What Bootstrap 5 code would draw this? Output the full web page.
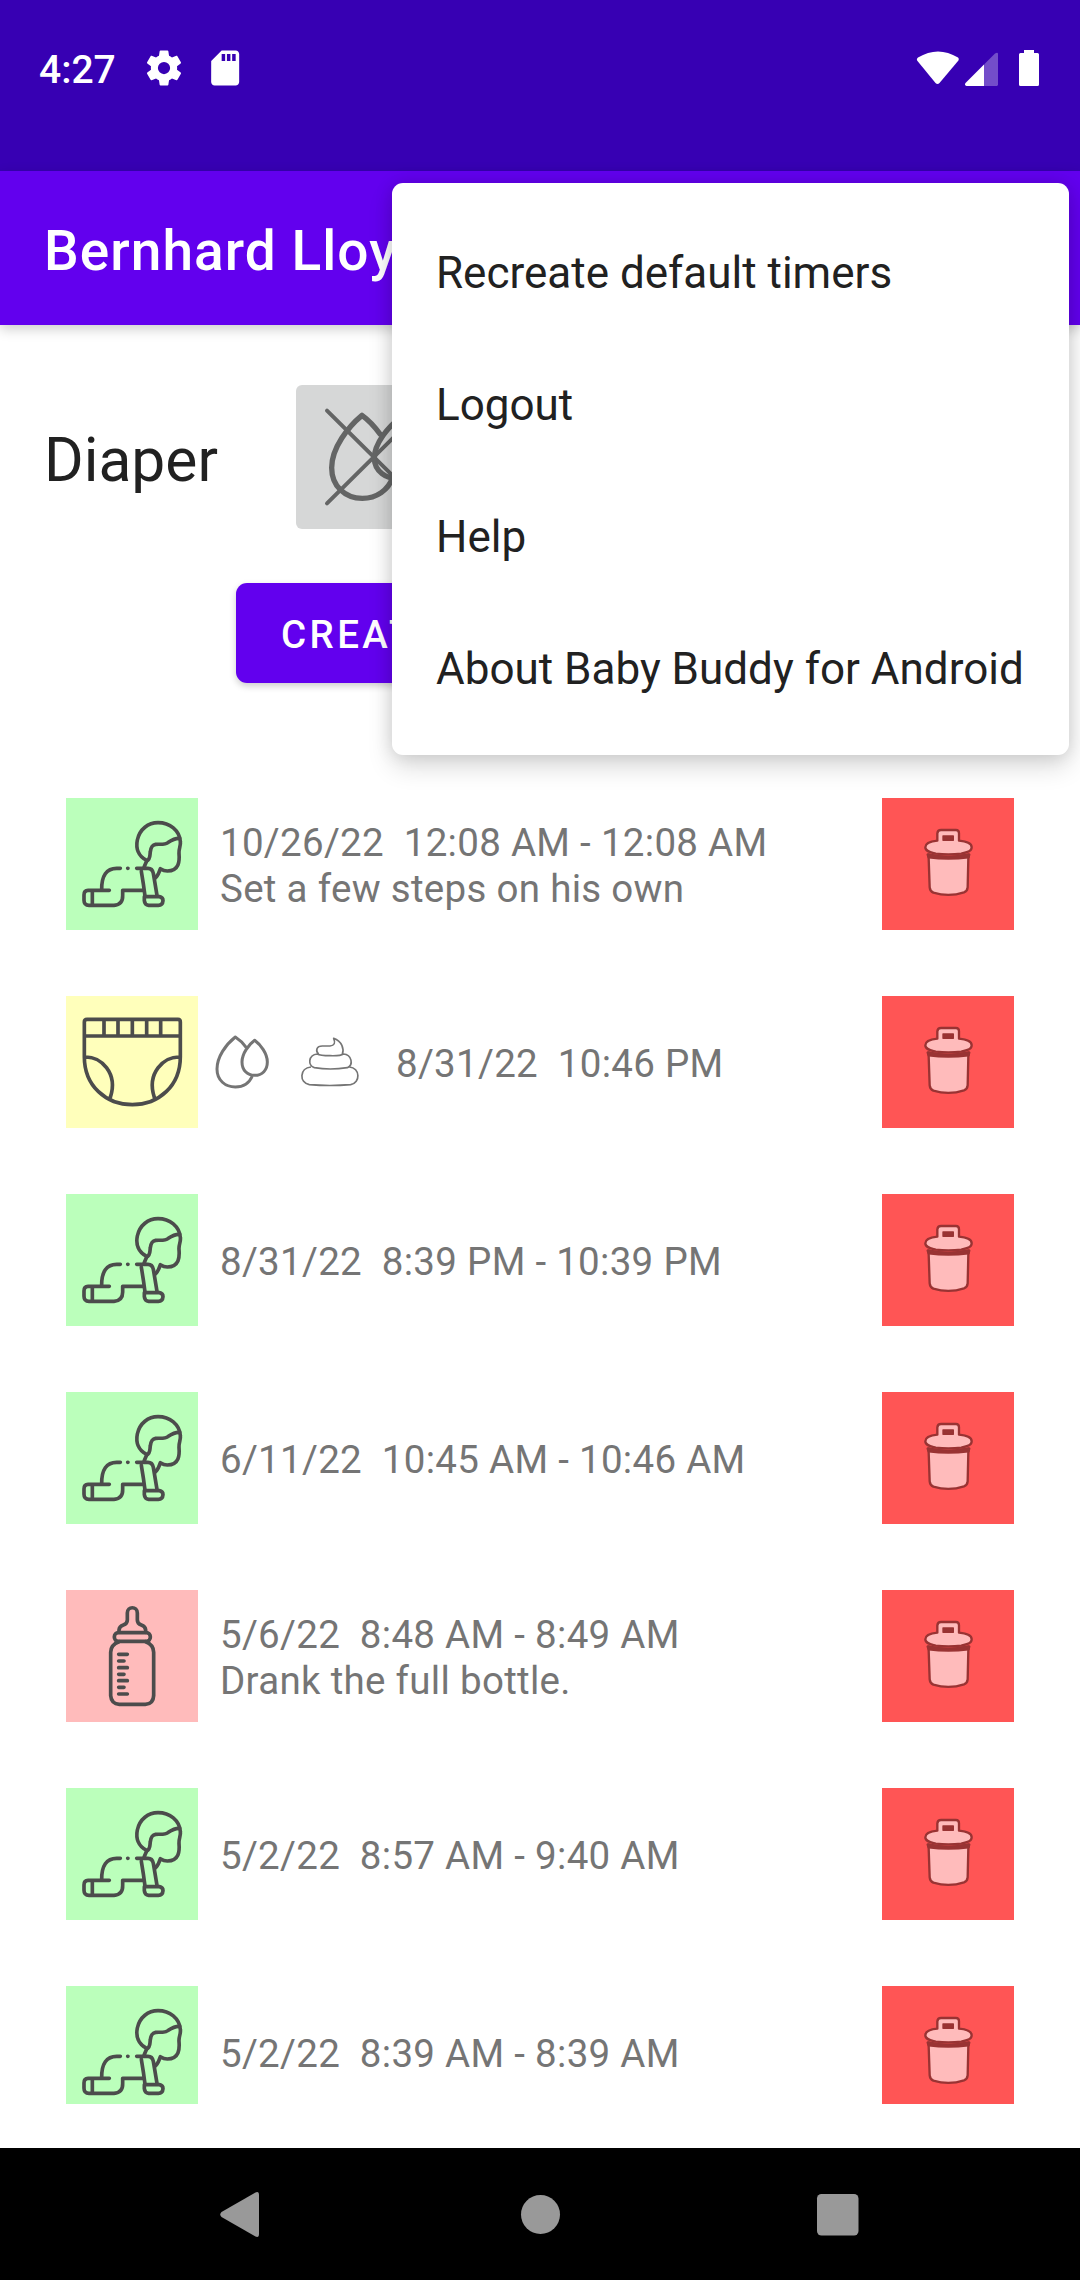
<!DOCTYPE html>
<html lang="en">
<head>
<meta charset="utf-8">
<meta name="viewport" content="width=device-width, initial-scale=1">
<title>Baby Buddy</title>
<link rel="stylesheet" href="https://cdn.jsdelivr.net/npm/bootstrap@5.3.0/dist/css/bootstrap.min.css">
<style>
body { font-family: Roboto, sans-serif; width: 1080px; height: 2280px; overflow: hidden; background: #fff; color: #212121; }
svg { display: block; flex: none; }
.status-area { height: 171px; background: #3700b3; padding: 0 40px 0 39px; }
.status-line { height: 135px; }
.clock { font-size: 39px; font-weight: 500; line-height: 46px; width: 104px; padding-top: 4px; }
.app-bar { height: 154px; background: #6200ee; padding: 6px 44px 0; box-shadow: 0 4px 12px rgba(0,0,0,.2); }
.app-title { font-size: 55px; font-weight: 500; letter-spacing: 1.05px; }
.entry-form { height: 429px; padding-top: 60px; }
.entry-row { padding-left: 44px; }
.entry-label { font-size: 60.5px; width: 252px; padding-top: 8px; }
.toggle-tile { width: 144px; height: 144px; background: #d6d7d7; border-radius: 6px; }
.create-btn { width: 608px; height: 100px; margin: 54px auto 0; padding: 4px 0 0 45px; border: 0; border-radius: 11px; background: #6200ee; font-size: 38.5px; font-weight: 500; letter-spacing: 3.4px; box-shadow: 0 3px 7px rgba(0,0,0,.2); }
.timeline { height: 1350px; padding: 44px 66px 0; gap: 66px; }
.timeline-clip { height: 1350px; overflow: hidden; }
.entry { height: 132px; flex: none; }
.tile { width: 132px; height: 132px; }
.tile-play { background: #bbffbb; }
.tile-change { background: #ffffbb; }
.tile-feed { background: #ffbbbb; }
.tile-delete { background: #ff5555; }
.entry-text { margin-left: 22px; padding-top: 3px; font-size: 38.5px; line-height: 46px; color: #757575; white-space: pre; letter-spacing: .3px; }
.entry-text-change { margin-left: 30px; }
.ink { fill: none; stroke: #4c4c4c; stroke-width: 11; stroke-linejoin: round; stroke-linecap: round; }
.sys-nav { height: 132px; background: #000; }
.overflow-menu { position: absolute; left: 392px; top: 183px; width: 677px; padding: 22px 0; background: #fff; border-radius: 11px; box-shadow: 0 12px 26px rgba(0,0,0,.14), 0 0 18px rgba(0,0,0,.13); }
.overflow-menu a { height: 132px; padding: 3px 44px 0; font-size: 44px; color: #212121; white-space: nowrap; text-decoration: none; }
</style>
</head>
<body class="position-relative d-flex flex-column">
<svg width="0" height="0" class="position-absolute">
  <symbol id="baby" viewBox="48 54 396 396">
    <g class="ink">
      <path d="M290 241C265 229 257 205 262 180C269 147 295 128 324 128C360 128 388 151 391 184C393 199 386 204 387 220C389 243 388 272 352 273C343 273 337 270 331 266C328 276 323 287 317 293"/>
      <path d="M290 243C302 238 299 226 301 215C303 200 307 195 317 193C332 192 345 195 355 187C365 180 374 174 389 175"/>
      <path d="M290 243L282 262M211 265H200C170 265 154 286 155 331M233 265h1M260 265H294Q307 265 310 280L321 346M274 274Q281 315 285 348M178 331H114Q102 331 102 345V361Q102 376 117 376H192Q219 374 218 346V331H278M127 333V374"/>
      <path d="M283 350H328Q339 352 339 362Q338 376 325 376H296Q284 375 283 362Z"/>
    </g>
  </symbol>
  <symbol id="diaper" viewBox="48 48 396 396">
    <g class="ink">
      <path d="M111 118H384Q391 118 391 126V230C391 318 326 374 247 374C168 374 103 318 103 230V126Q103 118 111 118ZM104 168H390M162 120V166M204 120V166M247 120V166M290 120V166M332 120V166M105 231C153 229 205 280 181 352M389 231C341 229 289 280 313 352"/>
    </g>
  </symbol>
  <symbol id="bottle" viewBox="48 60 396 396">
    <g class="ink">
      <path d="M207 187V180Q208 169 220 165Q232 161 232 150V129C232 108 262 108 262 129V150Q262 161 274 165Q286 169 287 180V187"/>
      <rect x="193" y="188" width="108" height="26" rx="12"/>
      <path d="M207 215Q182 224 182 247V377Q184 402 208 403H286Q310 402 311 377V247Q311 224 287 215"/>
      <path d="M206 253H232M206 273H222M206 293H232M206 313H222M206 332H232M206 352H222M206 372H232"/>
    </g>
  </symbol>
  <symbol id="trash" viewBox="66 54 396 396">
    <g fill="#ffbbbb" stroke="#993333" stroke-width="7" stroke-linejoin="round">
      <path d="M205 223Q265 237 326 223Q327 229 325 235L323 322Q322 333 312 337Q267 352 220 338Q210 333 209 322L206 235Z"/>
      <path d="M203 224Q265 240 328 224L325 232Q265 239 206 232Z" fill="#993333"/>
      <path d="M232 182V160Q233 150 243 150H288Q297 150 297 160V182C320 184 335 190 335 202C335 215 320 217 304 221Q265 225 227 221C212 217 196 215 196 202C196 190 211 184 232 182Z"/>
      <rect x="249" y="168" width="31" height="13" fill="#993333" stroke-width="4"/>
    </g>
  </symbol>
</svg>

<header class="status-area text-white">
  <div class="status-line d-flex align-items-center justify-content-between">
    <div class="d-flex align-items-center">
      <span class="clock">4:27</span>
      <svg width="42" height="42" viewBox="0 0 24 24" fill="#fff"><path d="M19.43 12.98c.04-.32.07-.64.07-.98s-.03-.66-.07-.98l2.11-1.65c.19-.15.24-.42.12-.64l-2-3.46c-.12-.22-.39-.3-.61-.22l-2.49 1c-.52-.4-1.08-.73-1.69-.98l-.38-2.65C14.460 2.180 14.250 2 14 2h-4c-.25 0-.46.18-.49.42l-.38 2.65c-.61.25-1.170.59-1.690.98l-2.490-1c-.23-.09-.49 0-.61.22l-2 3.460c-.13.22-.07.49.12.64l2.110 1.650c-.04.32-.07.65-.07.98s.03.66.07.98l-2.110 1.650c-.19.15-.24.42-.12.64l2 3.460c.12.22.39.3.61.22l2.490-1c.52.4 1.080.73 1.690.98l.38 2.650c.03.24.24.42.49.42h4c.25 0 .46-.18.49-.42l.38-2.650c.61-.25 1.170-.59 1.690-.98l2.490 1c.23.09.49 0 .61-.22l2-3.460c.12-.22.07-.49-.12-.64l-2.110-1.650zM12 15.500a3.500 3.500 0 1 1 0-7 3.500 3.500 0 0 1 0 7z"/></svg>
      <svg class="ms-3" width="45" height="42" viewBox="-1.800 0 25.700 24" fill="#fff"><path d="M18 2h-8L4.020 8 4 20c0 1.100.9 2 2 2h12c1.100 0 2-.9 2-2V4c0-1.100-.9-2-2-2zm-6 6h-2V4h2v4zm3 0h-2V4h2v4zm3 0h-2V4h2v4z"/></svg>
    </div>
    <svg width="124" height="36" viewBox="916 49 124 36" fill="#fff">
      <path d="M918 56.500Q938 44.500 958 56.500Q959.500 58 958 60L939.500 82Q937.500 84 935.500 82L917.500 60Q916 58 918 56.500Z"/>
      <path d="M984 63.500V85H966.500Q964 84 965.500 82Z"/>
      <path d="M984 63.500L995 52.500Q998 51 998 53V84L997 85H984Z" opacity=".3"/>
      <path d="M1024 49h10v3h3.500q1.500 0 1.500 1.500v30q0 1.500-1.500 1.500h-17q-1.500 0-1.500-1.500v-30q0-1.500 1.500-1.500h3.500z"/>
    </svg>
  </div>
</header>

<nav class="app-bar d-flex align-items-center text-white">
  <span class="app-title">Bernhard Lloyd</span>
</nav>

<main>
  <section class="entry-form">
    <div class="entry-row d-flex align-items-center">
      <span class="entry-label">Diaper</span>
      <div class="toggle-tile">
        <svg width="144" height="144" viewBox="888 135 432 432">
          <g fill="none" stroke="#646565" stroke-width="16" stroke-linecap="round" stroke-linejoin="round">
            <path d="M1140 282Q1115 247 1086 226C1045 260 995 323 995 383C995 438 1035 475 1087 475C1130 475 1165 450 1178 412"/>
            <path d="M1199 235C1167 258 1123 310 1123 354C1123 394 1159 418 1199 415C1239 415 1268 389 1268 351C1268 305 1230 257 1199 235Z"/>
            <path stroke-width="12" d="M981 212L1262 490M981 490L1262 212"/>
          </g>
        </svg>
      </div>
    </div>
    <button class="create-btn btn btn-primary d-flex align-items-center" type="button">CREATE</button>
  </section>

  <section class="timeline-clip">
    <div class="timeline d-flex flex-column">
      <div class="entry d-flex align-items-center"><div class="tile tile-play"><svg width="132" height="132"><use href="#baby"/></svg></div><div class="entry-text">10/26/22  12:08 AM - 12:08 AM
Set a few steps on his own</div><div class="tile tile-delete ms-auto"><svg width="132" height="132"><use href="#trash"/></svg></div></div>
      <div class="entry d-flex align-items-center"><div class="tile tile-change"><svg width="132" height="132"><use href="#diaper"/></svg></div>
        <svg class="ms-2" width="80" height="132" viewBox="468 48 240 396"><g fill="none" stroke="#757575" stroke-width="9" stroke-linejoin="round"><path d="M589 203Q575 183 556 171C527 194 501 231 501 267C501 301 526 321 556 321C581 321 598 309 607 288"/><path d="M614 181C596 194 576 221 576 246C576 271 592 286 614 286C637 286 652 270 652 246C652 221 632 194 614 181Z"/></g></svg>
        <svg width="80" height="132" viewBox="708 48 240 396"><g fill="none" stroke="#757575" stroke-width="5" stroke-linejoin="round"><path d="M806 223C795 212 800 198 817 198H840Q860 196 851 175C876 184 883 207 877 223"/><path d="M802 222C774 225 773 257 793 263Q840 271 892 263C911 255 906 224 880 222Q872 228 840 227Q810 227 802 222Z"/><path d="M783 261C748 264 747 309 778 314Q840 319 902 314C932 309 931 263 898 261"/></g></svg>
        <div class="entry-text entry-text-change">8/31/22  10:46 PM</div><div class="tile tile-delete ms-auto"><svg width="132" height="132"><use href="#trash"/></svg></div></div>
      <div class="entry d-flex align-items-center"><div class="tile tile-play"><svg width="132" height="132"><use href="#baby"/></svg></div><div class="entry-text">8/31/22  8:39 PM - 10:39 PM</div><div class="tile tile-delete ms-auto"><svg width="132" height="132"><use href="#trash"/></svg></div></div>
      <div class="entry d-flex align-items-center"><div class="tile tile-play"><svg width="132" height="132"><use href="#baby"/></svg></div><div class="entry-text">6/11/22  10:45 AM - 10:46 AM</div><div class="tile tile-delete ms-auto"><svg width="132" height="132"><use href="#trash"/></svg></div></div>
      <div class="entry d-flex align-items-center"><div class="tile tile-feed"><svg width="132" height="132"><use href="#bottle"/></svg></div><div class="entry-text">5/6/22  8:48 AM - 8:49 AM
Drank the full bottle.</div><div class="tile tile-delete ms-auto"><svg width="132" height="132"><use href="#trash"/></svg></div></div>
      <div class="entry d-flex align-items-center"><div class="tile tile-play"><svg width="132" height="132"><use href="#baby"/></svg></div><div class="entry-text">5/2/22  8:57 AM - 9:40 AM</div><div class="tile tile-delete ms-auto"><svg width="132" height="132"><use href="#trash"/></svg></div></div>
      <div class="entry d-flex align-items-center"><div class="tile tile-play"><svg width="132" height="132"><use href="#baby"/></svg></div><div class="entry-text">5/2/22  8:39 AM - 8:39 AM</div><div class="tile tile-delete ms-auto"><svg width="132" height="132"><use href="#trash"/></svg></div></div>
    </div>
  </section>
</main>

<footer class="sys-nav mt-auto">
  <svg width="1080" height="132" viewBox="0 2148 1080 132" fill="#999">
    <path d="M221.500 2212L255.500 2192.500Q259 2191 259 2195V2234Q259 2238 255.500 2236.500L221.500 2217Q219 2214.500 221.500 2212Z"/>
    <circle cx="540.500" cy="2214.500" r="19.500"/>
    <rect x="817" y="2194" width="41.500" height="41.500" rx="4.500"/>
  </svg>
</footer>

<div class="overflow-menu">
  <a href="#" class="d-flex align-items-center">Recreate default timers</a>
  <a href="#" class="d-flex align-items-center">Logout</a>
  <a href="#" class="d-flex align-items-center">Help</a>
  <a href="#" class="d-flex align-items-center">About Baby Buddy for Android</a>
</div>
<script src="https://cdn.jsdelivr.net/npm/bootstrap@5.3.0/dist/js/bootstrap.bundle.min.js"></script>
</body>
</html>
